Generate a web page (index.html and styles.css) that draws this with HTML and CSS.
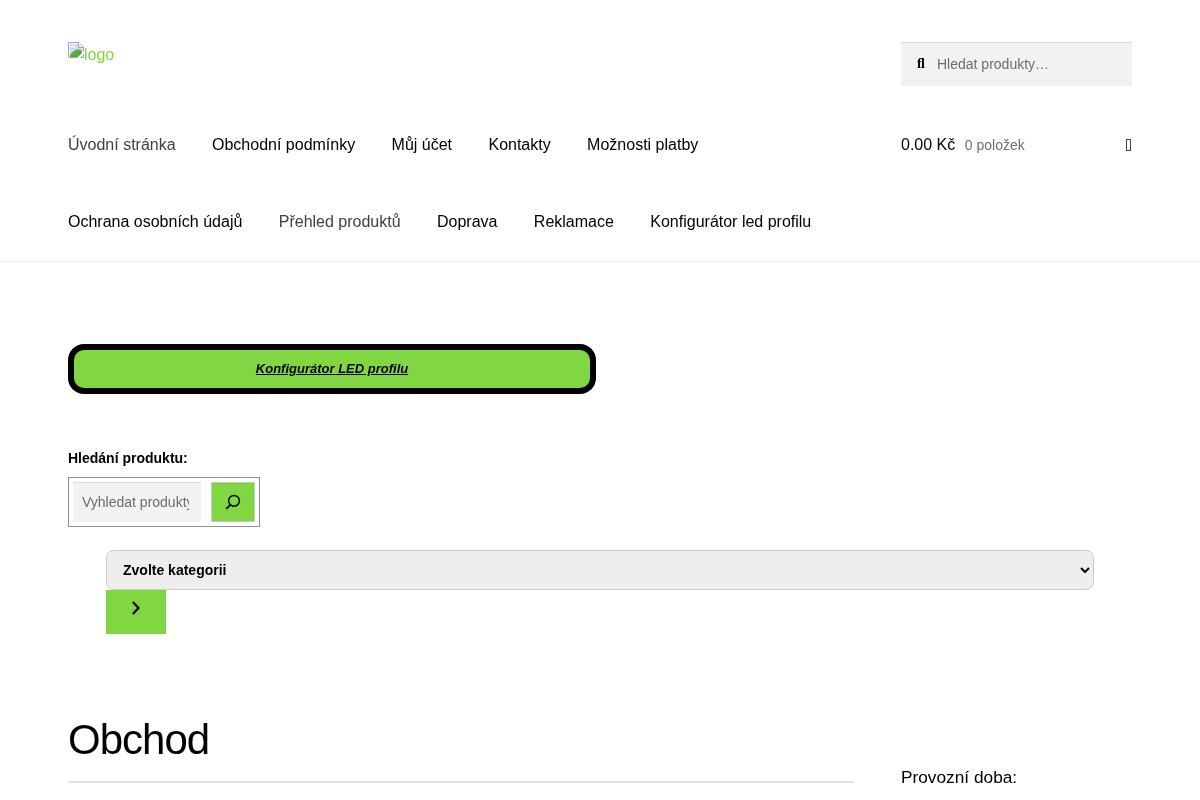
FILE: index.html
```html
<!DOCTYPE html>
<html lang="cs">
<head>
<meta charset="utf-8">
<title>Obchod</title>
<link rel="stylesheet" href="styles.css">
</head>
<body>
<header class="site-header">
  <div class="col-full">
    <div class="top-row">
      <a class="logo" href="#">
        <svg class="broken" width="16" height="16" viewBox="0 0 16 16" aria-hidden="true">
          <path d="M.5.5H11L15.500 5v10.500H.5z" fill="#fff" stroke="#a3a3a3"/>
          <path d="M2 2h8.500l3.500 3.500V15H2z" fill="#c9dcf7"/>
          <path d="M10.500.5v5h5" fill="#f2f2f2" stroke="#a3a3a3"/>
          <path d="M2 15v-2c2-3 5-5.500 8-5.500 2 0 3 .5 4 1.500v6z" fill="#5fa838"/>
          <path d="M3 4h4v1.500H3z" fill="#fff"/>
          <path d="M9 16l7-7v3l-4 4z" fill="#fff"/>
        </svg><span class="logo-text">logo</span>
      </a>
      <form class="site-search">
        <span class="search-glyph">ﬂ</span>
        <input class="site-search-input" type="text" placeholder="Hledat produkty…">
      </form>
    </div>
    <div class="nav-row">
      <nav class="main-nav">
        <ul class="nav-list">
          <li><a class="current" href="#">Úvodní stránka</a></li>
          <li><a href="#">Obchodní podmínky</a></li>
          <li><a href="#">Můj účet</a></li>
          <li><a href="#">Kontakty</a></li>
          <li><a href="#">Možnosti platby</a></li>
          <li><a href="#">Ochrana osobních údajů</a></li>
          <li><a class="current" href="#">Přehled produktů</a></li>
          <li><a href="#">Doprava</a></li>
          <li><a href="#">Reklamace</a></li>
          <li><a href="#">Konfigurátor led profilu</a></li>
        </ul>
      </nav>
      <a class="cart" href="#">
        <span class="cart-total">0.00 Kč</span>
        <span class="cart-count">0 položek</span>
        <span class="cart-glyph"></span>
      </a>
    </div>
  </div>
</header>
<main class="col-full content">
  <div class="config-box"><a href="#">Konfigurátor LED profilu</a></div>
  <div class="widget-title">Hledání produktu:</div>
  <form class="product-search">
    <input class="product-search-input" type="text" placeholder="Vyhledat produkty…">
    <button class="product-search-btn" type="button" aria-label="Hledat">
      <svg width="16" height="16" viewBox="0 0 16 16" aria-hidden="true">
        <circle cx="9" cy="6.800" r="5.400" fill="none" stroke="#000" stroke-width="1.500"/>
        <path d="M5.200 10.800 1.200 14.800" fill="none" stroke="#000" stroke-width="1.700"/>
      </svg>
    </button>
  </form>
  <div class="category-form">
    <select class="category-select">
      <option>Zvolte kategorii</option>
    </select>
    <button class="category-btn" type="button" aria-label="Pokračovat">
      <svg class="chevron" width="10" height="14" viewBox="0 0 10 14" aria-hidden="true">
        <path d="M1.800 1 7.500 7l-5.700 6" fill="none" stroke="#000" stroke-width="2.200"/>
      </svg>
    </button>
  </div>
  <div class="columns">
    <div class="primary">
      <h1 class="page-title">Obchod</h1>
    </div>
    <aside class="secondary">
      <div class="sidebar-title">Provozní doba:</div>
    </aside>
  </div>
</main>
</body>
</html>
```
FILE: styles.css
```css
* {
  box-sizing: border-box;
}
html,
body {
  margin: 0;
  height: 800px;
  overflow: hidden;
}
body {
  background: #fff;
  color: #000;
  font-family: Helvetica, "Liberation Sans", Arial, sans-serif;
  font-size: 16px;
  line-height: 1.618;
}
a {
  color: #000;
  text-decoration: none;
}
.col-full {
  margin: 0 68px;
}
.site-header,
.content {
  will-change: opacity;
}
.site-header {
  border-bottom: 1px solid #f0f0f0;
  height: 262px;
  padding-top: 42px;
}
.top-row {
  display: flex;
  justify-content: space-between;
  align-items: flex-start;
}
.logo {
  color: #81d742;
  display: flex;
  align-items: flex-start;
  font-size: 16px;
  line-height: 19px;
}
.broken {
  display: block;
  flex: none;
}
.logo-text {
  margin-top: 3px;
}
.site-search {
  width: 231px;
  height: 44px;
  background: #f2f2f2;
  border-top: 1px solid #d9d9d9;
  display: flex;
  align-items: center;
  padding-left: 16px;
}
.search-glyph {
  font-family: "Liberation Serif", serif;
  font-size: 14px;
  font-weight: 700;
  width: 20px;
  color: #000;
}
.site-search-input {
  border: 0;
  background: transparent;
  font: 14px Helvetica, "Liberation Sans", Arial, sans-serif;
  padding: 0 0 2px;
  width: 190px;
  color: #43454b;
}
.site-search-input::placeholder,
.product-search-input::placeholder {
  color: #6d6d6d;
  opacity: 1;
}
.nav-row {
  display: flex;
  justify-content: space-between;
  align-items: flex-start;
  margin-top: 20px;
}
.main-nav {
  width: 786px;
}
.nav-list {
  list-style: none;
  margin: 0;
  padding: 0;
  display: flex;
  flex-wrap: wrap;
  column-gap: 36.400px;
}
.nav-list a {
  display: block;
  padding: 26px 0 25px;
  line-height: 26px;
}
.nav-list a.current {
  color: #404040;
}
.cart {
  width: 231px;
  display: flex;
  align-items: baseline;
  padding-top: 26px;
  line-height: 26px;
}
.cart-count {
  font-size: 14px;
  color: #6d6d6d;
  margin-left: 9.600px;
}
.cart-glyph {
  margin-left: auto;
  width: 5px;
  height: 12px;
  border: 1px solid #444;
  align-self: flex-start;
  margin-top: 7px;
  margin-right: 1px;
}
.content {
  padding-top: 82px;
}
.config-box {
  width: 528px;
  height: 50px;
  background: #81d742;
  border: 6px solid #000;
  border-radius: 16px;
  text-align: center;
  font-size: 13px;
  font-weight: 700;
  font-style: italic;
  line-height: 37px;
}
.config-box a {
  text-decoration: underline;
}
.widget-title {
  font-size: 14px;
  font-weight: 700;
  line-height: 20px;
  margin-top: 54px;
}
.product-search {
  width: 192px;
  height: 50px;
  margin-top: 9px;
  border: 1px solid #8f8f8f;
  padding: 4px;
  display: flex;
  gap: 10px;
}
.product-search-input {
  width: 128px;
  height: 40px;
  border: 0;
  border-top: 1px solid #dcdcdc;
  background: #f2f2f2;
  font: 14px Helvetica, "Liberation Sans", Arial, sans-serif;
  padding: 0 12px 2px 9px;
}
.product-search-btn {
  width: 44px;
  height: 40px;
  background: #81d742;
  border: 1px solid #c8c8c8;
  padding: 0;
  display: flex;
  align-items: center;
  justify-content: center;
}
.category-form {
  margin: 23px 38px 0;
}
.category-select {
  display: block;
  width: 100%;
  height: 40px;
  background-color: #eee;
  border: 1px solid #ccc;
  border-radius: 8px;
  color: #000;
  font: 700 14px Helvetica, "Liberation Sans", Arial, sans-serif;
  padding: 0 12px;
}
.category-btn {
  display: flex;
  align-items: flex-start;
  justify-content: center;
  width: 60px;
  height: 44px;
  background: #81d742;
  border: 0;
  padding: 11px 0 0;
}
.chevron {
  display: block;
}
.columns {
  display: flex;
  justify-content: space-between;
  margin-top: 76px;
}
.primary {
  width: 786px;
  border-bottom: 2px solid #e4e4e4;
  height: 73px;
}
.page-title {
  margin: 0;
  font-size: 42px;
  font-weight: 400;
  letter-spacing: -1px;
  line-height: 60px;
}
.secondary {
  width: 231px;
}
.sidebar-title {
  font-size: 17.280px;
  line-height: 28px;
  margin-top: 53px;
}
```
